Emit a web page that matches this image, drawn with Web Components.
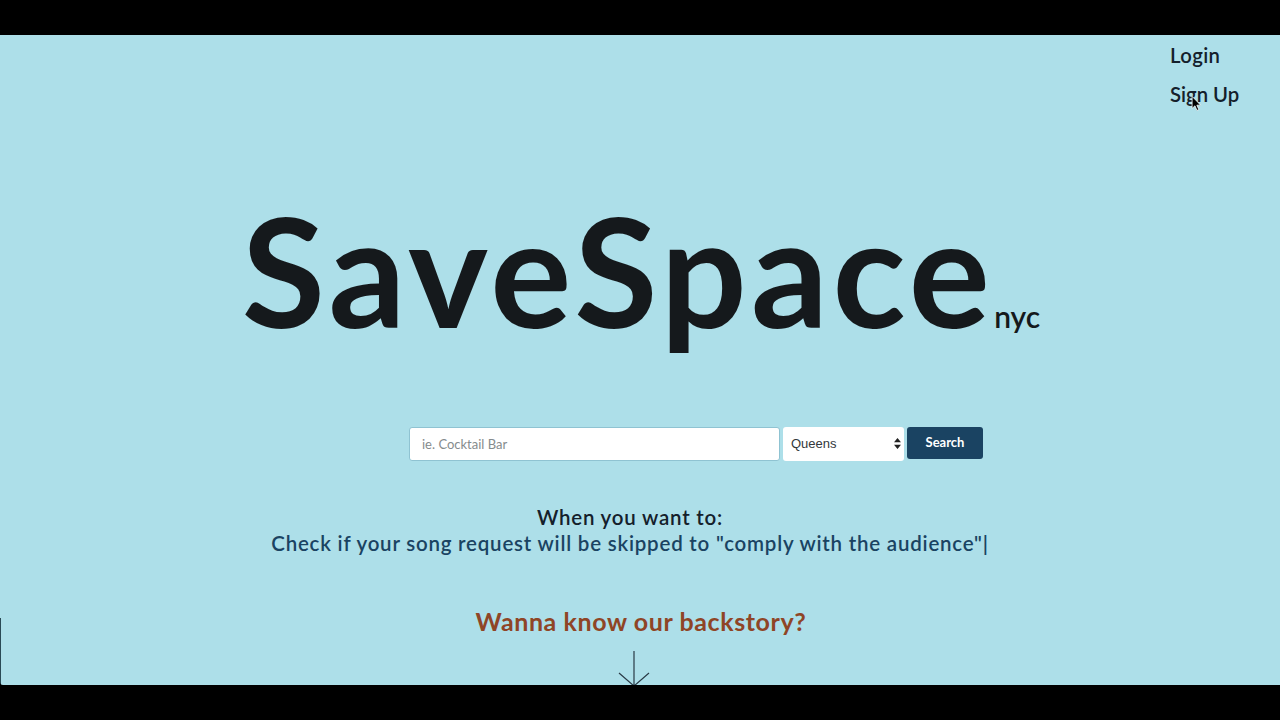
<!DOCTYPE html>
<html>
<head>
<meta charset="utf-8">
<title>SaveSpace nyc</title>
<style>
html, body { margin: 0; height: 100%; background: #000; overflow: hidden; }
body { display: flex; flex-direction: column; padding: 35px 0; box-sizing: border-box; }
</style>
</head>
<body>
<save-page></save-page>
<script>
class AuthNav extends HTMLElement {
	constructor() {
		super();
		this.root = this.attachShadow({ mode: 'open' });
		this.root.innerHTML = `
            <style>
                :host {
                    display: flex;
                    flex-direction: column;
                    align-items: flex-start;
                    gap: 14px;
                    padding: 8px 40px 0 0;
                    align-self: flex-end;
                    width: 70px;
                    height: 112px;
                    font: 600 20.3px/25px Lato, sans-serif;
                    color: #14202b;
                }
                a { color: inherit; text-decoration: none; white-space: nowrap; }
                .login { letter-spacing: .4px; }
                .wrap { position: relative; }
                svg { position: absolute; left: 21px; top: 13px; }
            </style>
            <a class="login" href="#">Login</a>
            <div class="wrap">
                <a href="#">Sign Up</a>
                <svg width="11" height="17" viewBox="0 0 10 15"><path d="M1 1v11l2.6-2.4 1.8 4.2 1.7-.8-1.8-4h3.4z" fill="#000" stroke="#fff" stroke-width=".7"/></svg>
            </div>
        `;
	}
}

class BrandLogo extends HTMLElement {
	constructor() {
		super();
		this.root = this.attachShadow({ mode: 'open' });
		this.root.innerHTML = `
            <style>
                :host {
                    display: flex;
                    justify-content: center;
                    align-items: baseline;
                    box-sizing: border-box;
                    height: 272px;
                    padding: 24px 0 0 2px;
                    color: #15191c;
                    font-family: Lato, sans-serif;
                    font-weight: 700;
                }
                .name { font-size: 152px; line-height: 180px; letter-spacing: 4.3px; }
                .city { font-size: 30px; font-weight: 600; }
            </style>
            <span class="name">SaveSpace</span><span class="city">nyc</span>
        `;
	}
}

class SearchBar extends HTMLElement {
	constructor() {
		super();
		this.root = this.attachShadow({ mode: 'open' });
		this.root.innerHTML = `
            <style>
                :host {
                    display: flex;
                    justify-content: center;
                    gap: 3px;
                    height: 34px;
                    padding-left: 112px;
                }
                input, .select, button { box-sizing: border-box; border-radius: 3px; }
                input {
                    width: 371px;
                    height: 34px;
                    border: 1px solid #8fc3d2;
                    padding: 0 12px;
                    font: 13px Lato, sans-serif;
                    background: #fff;
                    outline: none;
                }
                input::placeholder { color: #858b8d; opacity: 1; }
                .select {
                    width: 121px;
                    height: 34px;
                    background: #fff;
                    display: flex;
                    align-items: center;
                    justify-content: space-between;
                    padding: 0 3px 1px 8px;
                    font: 13px "Liberation Sans", sans-serif;
                    color: #33383b;
                }
                .select svg { margin-right: 0; }
                button {
                    width: 76px;
                    height: 32px;
                    border: 0;
                    background: #1a4362;
                    color: #fff;
                    font: 700 13px Lato, sans-serif;
                    padding: 0 0 3px;
                }
            </style>
            <input placeholder="ie. Cocktail Bar">
            <div class="select">
                <span>Queens</span>
                <svg width="7" height="11" viewBox="0 0 7 11"><path d="M3.5 0 7 4.3H0zM3.5 11 0 6.7h7z" fill="#222"/></svg>
            </div>
            <button>Search</button>
        `;
	}
}

class TypedLine extends HTMLElement {
	constructor() {
		super();
		this.root = this.attachShadow({ mode: 'open' });
		this.root.innerHTML = `
            <style>
                :host {
                    display: block;
                    margin-top: 43px;
                    text-align: center;
                    font: 600 20.5px/26px Lato, sans-serif;
                    letter-spacing: .78px;
                    padding-right: 20px;
                }
                .lead { color: #14202b; }
                .typed { color: #1a4362; }
            </style>
            <div class="lead"><slot name="lead"></slot></div>
            <div class="typed"><slot name="typed"></slot></div>
        `;
	}
}

class BackstoryLink extends HTMLElement {
	constructor() {
		super();
		this.root = this.attachShadow({ mode: 'open' });
		this.root.innerHTML = `
            <style>
                :host {
                    display: flex;
                    flex-direction: column;
                    align-items: center;
                    margin-top: 49px;
                    flex: 1;
                    overflow: hidden;
                    color: #8f4526;
                    font: 700 25px/32px Lato, sans-serif;
                    letter-spacing: .6px;
                }
                .label { padding-left: 2px; }
                svg { display: block; margin: 14px 13px 0 0; flex: none; }
            </style>
            <div class="label"><slot></slot></div>
            <svg width="32" height="50" viewBox="0 0 32 50" fill="none" stroke="#2a3b47" stroke-width="1.2">
                <path d="M16 0V35M1 22 16 35 31 22"/>
            </svg>
        `;
	}
}

class SavePage extends HTMLElement {
	constructor() {
		super();
		this.root = this.attachShadow({ mode: 'open' });
		this.root.innerHTML = `
            <style>
                :host {
                    display: flex;
                    flex-direction: column;
                    height: 650px;
                    background: linear-gradient(#2a4a55, #2a4a55) 0 583px / 1px 67px no-repeat, #addfe9;
                    border-bottom-left-radius: 3px;
                    overflow: hidden;
                }
            </style>
            <auth-nav></auth-nav>
            <brand-logo></brand-logo>
            <search-bar></search-bar>
            <typed-line>
                <span slot="lead">When you want to:</span>
                <span slot="typed">Check if your song request will be skipped to "comply with the audience"|</span>
            </typed-line>
            <backstory-link>Wanna know our backstory?</backstory-link>
        `;
	}
}

customElements.define('auth-nav', AuthNav);
customElements.define('brand-logo', BrandLogo);
customElements.define('search-bar', SearchBar);
customElements.define('typed-line', TypedLine);
customElements.define('backstory-link', BackstoryLink);
customElements.define('save-page', SavePage);
</script>
</body>
</html>
